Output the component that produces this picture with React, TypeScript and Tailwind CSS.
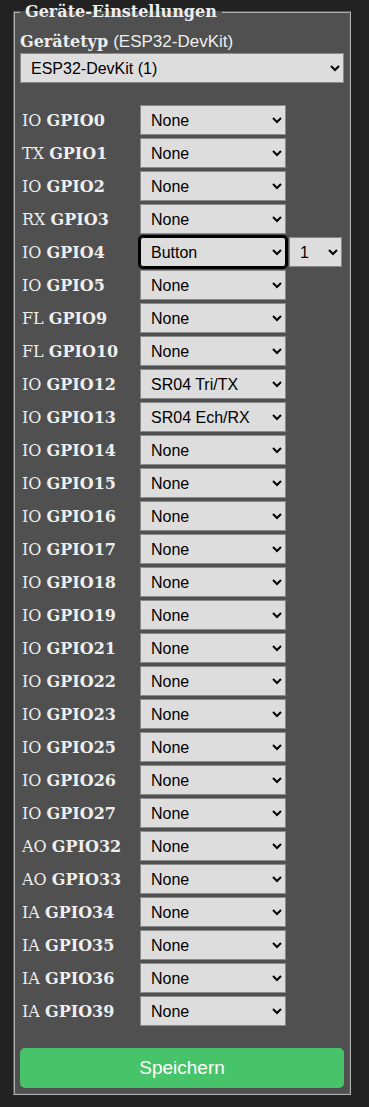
import { useState } from 'react'

const PINS: [string, string, string][] = [
  ['IO', 'GPIO0', 'None'],
  ['TX', 'GPIO1', 'None'],
  ['IO', 'GPIO2', 'None'],
  ['RX', 'GPIO3', 'None'],
  ['IO', 'GPIO4', 'Button'],
  ['IO', 'GPIO5', 'None'],
  ['FL', 'GPIO9', 'None'],
  ['FL', 'GPIO10', 'None'],
  ['IO', 'GPIO12', 'SR04 Tri/TX'],
  ['IO', 'GPIO13', 'SR04 Ech/RX'],
  ['IO', 'GPIO14', 'None'],
  ['IO', 'GPIO15', 'None'],
  ['IO', 'GPIO16', 'None'],
  ['IO', 'GPIO17', 'None'],
  ['IO', 'GPIO18', 'None'],
  ['IO', 'GPIO19', 'None'],
  ['IO', 'GPIO21', 'None'],
  ['IO', 'GPIO22', 'None'],
  ['IO', 'GPIO23', 'None'],
  ['IO', 'GPIO25', 'None'],
  ['IO', 'GPIO26', 'None'],
  ['IO', 'GPIO27', 'None'],
  ['AO', 'GPIO32', 'None'],
  ['AO', 'GPIO33', 'None'],
  ['IA', 'GPIO34', 'None'],
  ['IA', 'GPIO35', 'None'],
  ['IA', 'GPIO36', 'None'],
  ['IA', 'GPIO39', 'None'],
]

const OPTIONS = ['None', 'Button', 'Switch', 'Relay', 'LED', 'SR04 Tri/TX', 'SR04 Ech/RX']

const selectCls =
  "h-[30px] bg-[#dddddd] border border-[#8a8a8a] text-black text-[16px] pl-[6px] pr-[2px] font-['Liberation_Sans',Arial,sans-serif]"

function PinRow({ kind, name, initial }: { kind: string; name: string; initial: string }) {
  const [value, setValue] = useState(initial)
  const focused = name === 'GPIO4'

  return (
    <div className="flex items-center h-[30px]">
      <div className="w-[120px] pl-[2px] pt-[2px] text-[16px] text-[#eeeeee] whitespace-nowrap">
        {kind} <b>{name}</b>
      </div>
      <select
        value={value}
        onChange={(e) => setValue(e.target.value)}
        className={`${selectCls} w-[146px] ${focused ? 'outline-2 outline-black rounded-[3px] border-black' : 'outline-none'}`}
      >
        {OPTIONS.map((o) => (
          <option key={o} value={o}>
            {o}
          </option>
        ))}
      </select>
      {focused && (
        <select defaultValue="1" className={`${selectCls} w-[53px] ml-[3px] text-[#3a0000] outline-none`}>
          {['1', '2', '3', '4'].map((n) => (
            <option key={n} value={n}>
              {n}
            </option>
          ))}
        </select>
      )}
    </div>
  )
}

export default function App() {
  const [board, setBoard] = useState('esp32')

  return (
    <div className="min-h-[1107px] bg-[#222222] pt-[4px] font-['DejaVu_Serif',serif]">
      <fieldset className="ml-[13px] w-[338px] border-2 [border-style:groove] border-[#b0b0b0] bg-[#505050] px-[5px] pb-[5px]">
        <legend className="px-[5px] text-[16px] font-bold text-[#eeeeee] leading-[15px]">
          Geräte-Einstellungen
        </legend>

        <div className="mt-[14px] text-[16px] leading-[18px] text-[#eeeeee]">
          <b>Gerätetyp</b>{' '}
          <span className="text-[17px] font-['Liberation_Sans',Arial,sans-serif]">(ESP32-DevKit)</span>
        </div>
        <select
          value={board}
          onChange={(e) => setBoard(e.target.value)}
          className={`${selectCls} w-full mt-[2px] outline-none`}
        >
          <option value="esp32">ESP32-DevKit (1)</option>
          <option value="esp8266">ESP8266 (2)</option>
        </select>

        <div className="mt-[22px] flex flex-col gap-[3px]">
          {PINS.map(([k, n, v]) => (
            <PinRow key={n} kind={k} name={n} initial={v} />
          ))}
        </div>

        <button
          type="button"
          className="mt-[22px] w-full h-[40px] rounded-[5px] bg-[#47c46a] text-white text-[19px] font-['Liberation_Sans',Arial,sans-serif]"
        >
          Speichern
        </button>
      </fieldset>
    </div>
  )
}
